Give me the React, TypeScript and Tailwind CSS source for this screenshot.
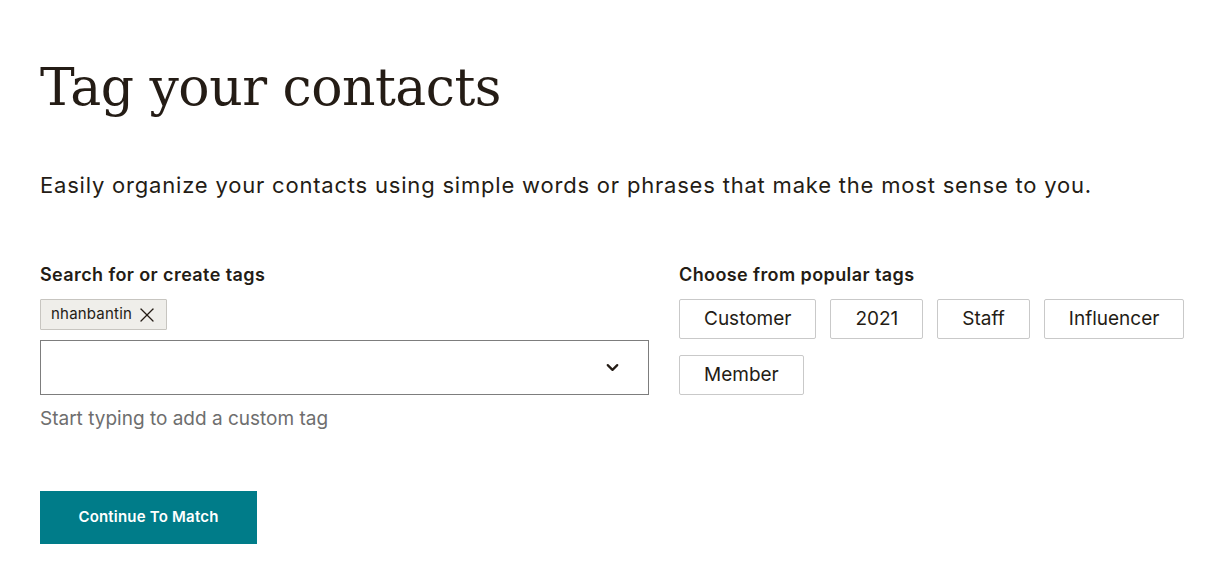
import React from 'react';
import { ChevronDown, X } from 'lucide-react';

const popularTags = ['Customer', '2021', 'Staff', 'Influencer', 'Member'];

const sans = "font-['Inter','Liberation_Sans',sans-serif]";

export default function App() {
  return (
    <div className={`min-h-screen bg-white px-10 pt-[52px] text-[#241c15] ${sans}`}>
      <h1 className="font-['DejaVu_Serif','Liberation_Serif',serif] text-[52px] leading-[70px] tracking-[-0.5px] text-[#241c15]">
        Tag your contacts
      </h1>

      <p className="mt-[49px] text-[22px] leading-[28px] tracking-[0.8px] text-[#241c15]">
        Easily organize your contacts using simple words or phrases that make the most sense to you.
      </p>

      <div className="mt-[64px] flex gap-[30px]">
        {/* Search / create */}
        <div className="w-[609px] shrink-0">
          <div className="text-[18px] font-semibold leading-6 tracking-[0.4px]">Search for or create tags</div>
          <div className="mt-[12px] flex">
            <span className="inline-flex h-[31px] items-center gap-[3px] rounded-[1px] border border-[#c7c5c0] bg-[#efeeea] pl-[10px] pr-[7px] text-[15px] tracking-[0.2px] text-[#241c15]">
              nhanbantin
              <X size={24} strokeWidth={1.3} />
            </span>
          </div>
          <div className="mt-[10px] flex h-[55px] items-center justify-end border border-[#7d7d7d] pr-[26px]">
            <ChevronDown size={19} strokeWidth={2.8} />
          </div>
          <div className="mt-[12px] text-[19px] leading-6 text-[#6e6e6e]">Start typing to add a custom tag</div>
        </div>

        {/* Popular tags */}
        <div className="flex-1">
          <div className="text-[18px] font-semibold leading-6 tracking-[0.4px]">Choose from popular tags</div>
          <div className="mt-[12px] flex flex-wrap gap-x-[14px] gap-y-[16px]">
            {popularTags.map((t) => (
              <button
                key={t}
                className="h-[40px] rounded-[2px] border border-[#c9c9c9] bg-white px-[24px] text-[19px] text-[#241c15]"
              >
                {t}
              </button>
            ))}
          </div>
        </div>
      </div>

      <button className="mt-[60px] h-[53px] w-[217px] bg-[#007c89] text-[15px] font-semibold tracking-[0.2px] text-white">
        Continue To Match
      </button>
    </div>
  );
}
